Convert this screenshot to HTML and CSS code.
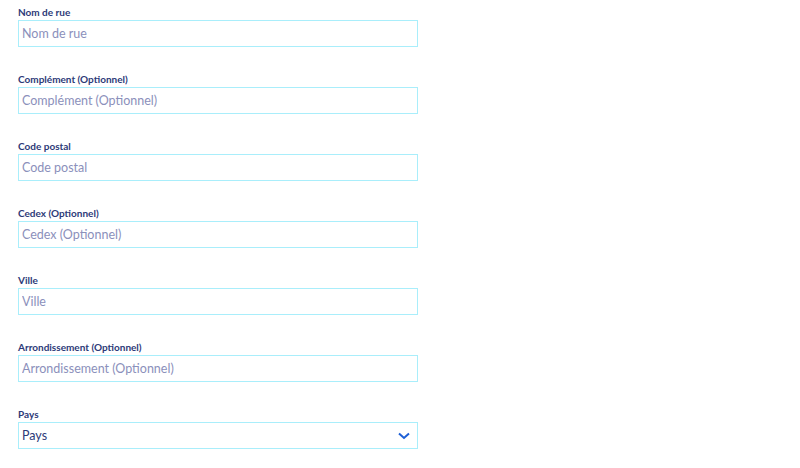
FILE: index.html
```html
<!DOCTYPE html>
<html lang="fr">
<head>
    <meta charset="UTF-8">
    <meta name="viewport" content="width=device-width, initial-scale=1.0">
    <title>Adresse</title>
    <link rel="stylesheet" href="styles.css">
</head>
<body>
    <form class="address-form">
        <div class="field">
            <label for="street">Nom de rue</label>
            <input id="street" type="text" placeholder="Nom de rue">
        </div>
        <div class="field">
            <label for="extra">Complément (Optionnel)</label>
            <input id="extra" type="text" placeholder="Complément (Optionnel)">
        </div>
        <div class="field">
            <label for="zip">Code postal</label>
            <input id="zip" type="text" placeholder="Code postal">
        </div>
        <div class="field">
            <label for="cedex">Cedex (Optionnel)</label>
            <input id="cedex" type="text" placeholder="Cedex (Optionnel)">
        </div>
        <div class="field">
            <label for="city">Ville</label>
            <input id="city" type="text" placeholder="Ville">
        </div>
        <div class="field">
            <label for="district">Arrondissement (Optionnel)</label>
            <input id="district" type="text" placeholder="Arrondissement (Optionnel)">
        </div>
        <div class="field">
            <label for="country">Pays</label>
            <div class="select-wrap">
                <select id="country">
                    <option>Pays</option>
                    <option>France</option>
                    <option>Belgique</option>
                    <option>Suisse</option>
                </select>
                <svg class="chevron" width="12" height="8" viewBox="0 0 12 8">
                    <path d="M1 1.5 L6 6 L11 1.5" fill="none" stroke="#1d5fd6" stroke-width="2"/>
                </svg>
            </div>
        </div>
    </form>
</body>
</html>
```

FILE: styles.css
```css
* {
    margin: 0;
    padding: 0;
    box-sizing: border-box;
}

body {
    font-family: 'Lato', 'Noto Sans', sans-serif;
    background: white;
    padding: 6px 18px;
}

.address-form {
    width: 400px;
    display: flex;
    flex-direction: column;
    gap: 26px;
}

label {
    display: block;
    font-size: 10px;
    line-height: 12px;
    font-weight: 700;
    color: #2d3a78;
    margin-bottom: 2px;
}

input,
select {
    display: block;
    width: 100%;
    height: 27px;
    padding: 0 3px;
    border: 1px solid #a9eefb;
    border-radius: 0;
    background: white;
    font-family: inherit;
    font-size: 12.5px;
    color: #2d3a78;
    outline: none;
}

input::placeholder {
    color: #8b90bb;
}

.select-wrap {
    position: relative;
}

select {
    appearance: none;
    -webkit-appearance: none;
}

.chevron {
    position: absolute;
    right: 8px;
    top: 10px;
    pointer-events: none;
}
```
